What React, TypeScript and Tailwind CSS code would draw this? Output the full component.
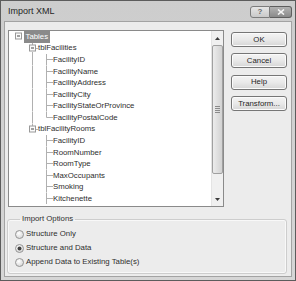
import React from "react";

type Kind = "root" | "mid" | "last";
type Row = { label: string; guides: boolean[]; kind: Kind; box?: boolean; selected?: boolean };

const H = 11.57;
const LINE = "#b0b0b0";

const rows: Row[] = [
  { label: "Tables", guides: [], kind: "root", box: true, selected: true },
  { label: "tblFacilities", guides: [false], kind: "mid", box: true },
  { label: "FacilityID", guides: [false, true], kind: "mid" },
  { label: "FacilityName", guides: [false, true], kind: "mid" },
  { label: "FacilityAddress", guides: [false, true], kind: "mid" },
  { label: "FacilityCity", guides: [false, true], kind: "mid" },
  { label: "FacilityStateOrProvince", guides: [false, true], kind: "mid" },
  { label: "FacilityPostalCode", guides: [false, true], kind: "last" },
  { label: "tblFacilityRooms", guides: [false], kind: "last", box: true },
  { label: "FacilityID", guides: [false, false], kind: "mid" },
  { label: "RoomNumber", guides: [false, false], kind: "mid" },
  { label: "RoomType", guides: [false, false], kind: "mid" },
  { label: "MaxOccupants", guides: [false, false], kind: "mid" },
  { label: "Smoking", guides: [false, false], kind: "mid" },
  { label: "Kitchenette", guides: [false, false], kind: "mid" },
];

function Guide({ on }: { on: boolean }) {
  return (
    <svg width={14} height={H} className="shrink-0 block">
      {on && <line x1={7.5} y1={0} x2={7.5} y2={H} stroke={LINE} strokeWidth={1} />}
    </svg>
  );
}

function Own({ kind, box }: { kind: Kind; box?: boolean }) {
  const cy = Math.floor(H / 2) + 0.5;
  if (box) {
    return (
      <svg width={13} height={H} className="shrink-0 block">
        {kind !== "root" && <line x1={7.5} y1={0} x2={7.5} y2={cy - 3.5} stroke={LINE} />}
        {kind === "mid" && <line x1={7.5} y1={cy + 3.5} x2={7.5} y2={H} stroke={LINE} />}
        {kind !== "root" && <line x1={11} y1={cy} x2={13} y2={cy} stroke={LINE} />}
        <rect x={4.5} y={cy - 3.5} width={6} height={6} fill="#fbfbfb" stroke="#999999" />
        <line x1={6} y1={cy - 0.5} x2={9} y2={cy - 0.5} stroke="#454545" />
      </svg>
    );
  }
  return (
    <svg width={14} height={H} className="shrink-0 block">
      <line x1={7.5} y1={0} x2={7.5} y2={kind === "last" ? cy : H} stroke={LINE} />
      <line x1={7.5} y1={cy} x2={14} y2={cy} stroke={LINE} />
    </svg>
  );
}

function TreeRow({ r }: { r: Row }) {
  return (
    <div className="flex items-center h-[11.57px]">
      {r.guides.map((g, i) => (
        <Guide key={i} on={g} />
      ))}
      <Own kind={r.kind} box={r.box} />
      {r.selected ? (
        <span className="h-full flex items-center bg-[#8a8a8a] text-white px-[1.5px] leading-none">{r.label}</span>
      ) : (
        <span className="leading-none text-[#2e2e2e]">{r.label}</span>
      )}
    </div>
  );
}

function Scrollbar() {
  return (
    <div className="w-[12px] flex flex-col bg-[#f0f0f0] border-l border-[#e4e4e4]">
      <div className="h-[14px] flex items-center justify-center">
        <svg width={5} height={3}>
          <polygon points="0,3 2.5,0 5,3" fill="#3c3c3c" />
        </svg>
      </div>
      <div className="h-[129px] rounded-[2px] border border-[#a0a0a0] bg-gradient-to-r from-[#ececec] to-[#d2d2d2] flex items-center justify-center">
        <div className="flex flex-col gap-[1px]">
          <div className="w-[5px] h-px bg-[#8a8a8a]" />
          <div className="w-[5px] h-px bg-[#8a8a8a]" />
          <div className="w-[5px] h-px bg-[#8a8a8a]" />
          <div className="w-[5px] h-px bg-[#8a8a8a]" />
        </div>
      </div>
      <div className="flex-1" />
      <div className="h-[13px] flex items-center justify-center">
        <svg width={5} height={3}>
          <polygon points="0,0 5,0 2.5,3" fill="#3c3c3c" />
        </svg>
      </div>
    </div>
  );
}

function Btn({ children }: { children: React.ReactNode }) {
  return (
    <div className="h-[15px] w-[56px] rounded-[3px] border border-[#767676] bg-gradient-to-b from-[#f4f4f4] via-[#e9e9e9] to-[#d6d6d6] shadow-[inset_0_0_0_1px_#fbfbfb] flex items-center justify-center text-[7.8px] text-[#262626] leading-none">
      {children}
    </div>
  );
}

function Radio({ checked }: { checked?: boolean }) {
  return (
    <svg width={9} height={9} className="shrink-0 block">
      <defs>
        <radialGradient id={checked ? "rgc" : "rg"} cx="40%" cy="35%" r="70%">
          <stop offset="0%" stopColor="#ffffff" />
          <stop offset="100%" stopColor="#d4d4d4" />
        </radialGradient>
      </defs>
      <circle cx={4.5} cy={4.5} r={4} fill={`url(#${checked ? "rgc" : "rg"})`} stroke="#959595" strokeWidth={1} />
      {checked && <circle cx={4.5} cy={4.5} r={2} fill="#404040" />}
    </svg>
  );
}

export default function App() {
  return (
    <div className="w-[296px] h-[281px] bg-gradient-to-b from-[#cdcdcd] to-[#d6d6d6] border border-[#5c5c5c] flex flex-col font-['Liberation_Sans',Arial,sans-serif] overflow-hidden">
      <div className="h-[20px] flex items-start justify-between shrink-0">
        <div className="pl-[7px] h-[20px] flex items-center text-[9px] text-[#262626] leading-none pt-[1px]">Import XML</div>
        <div className="flex mt-[5px] mr-[3px]">
          <div className="w-[20px] h-[12px] rounded-l-[3px] border border-[#7c7c7c] bg-gradient-to-b from-[#e6e6e6] to-[#c9c9c9] flex items-center justify-center text-[8px] font-bold text-[#6a6a6a] leading-none">
            ?
          </div>
          <div className="w-[22px] h-[12px] rounded-r-[3px] border border-l-0 border-[#5e5e5e] bg-gradient-to-b from-[#b3b3b3] to-[#8a8a8a] flex items-center justify-center">
            <svg width={8} height={6}>
              <path d="M1 0.5 L7 5.5 M7 0.5 L1 5.5" stroke="#f4f4f4" strokeWidth={1.6} />
            </svg>
          </div>
        </div>
      </div>
      <div className="flex-1 mx-[3px] mb-[3px] border border-[#a3a3a3] bg-[#ececec] flex flex-col text-[7.8px]">
        <div className="flex mt-[8px] ml-[3px] mr-[4px]">
          <div className="w-[216px] h-[177px] border border-[#8a8a8a] bg-white flex">
            <div className="flex-1 pl-[2px] flex flex-col overflow-hidden">
              {rows.map((r, i) => (
                <TreeRow key={i} r={r} />
              ))}
            </div>
            <Scrollbar />
          </div>
          <div className="ml-auto mt-[2px] flex flex-col gap-[6.4px]">
            <Btn>OK</Btn>
            <Btn>Cancel</Btn>
            <Btn>Help</Btn>
            <Btn>Transform...</Btn>
          </div>
        </div>
        <fieldset className="mt-[7px] ml-[2px] mr-[4px] border border-[#cdcdcd] rounded-[3px] shadow-[inset_0_0_0_1px_#f8f8f8] pl-[7px] pt-[3px] pb-[4px]">
          <legend className="ml-[5px] px-[2px] leading-[10px] text-[#2e2e2e]">Import Options</legend>
          <div className="flex flex-col">
            <div className="h-[14px] flex items-center gap-[2px] text-[#2e2e2e]">
              <Radio />
              <span className="leading-none">Structure Only</span>
            </div>
            <div className="h-[14px] flex items-center gap-[2px] text-[#2e2e2e]">
              <Radio checked />
              <span className="leading-none">Structure and Data</span>
            </div>
            <div className="h-[14px] flex items-center gap-[2px] text-[#2e2e2e]">
              <Radio />
              <span className="leading-none">Append Data to Existing Table(s)</span>
            </div>
          </div>
        </fieldset>
      </div>
    </div>
  );
}
